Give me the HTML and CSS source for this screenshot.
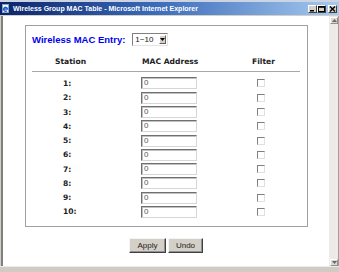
FILE: index.html
```html
<!DOCTYPE html>
<html>
<head>
<meta charset="utf-8">
<link rel="stylesheet" href="styles.css">
</head>
<body>
<div class="win">
  <div class="strip"></div>
  <div class="titlebar">
    <svg class="ie" width="8" height="9" viewBox="0 0 8 9">
      <rect x="0.5" y="0.5" width="6" height="8" fill="#fff" stroke="#8aa0c8"/>
      <path d="M1.5 5 H5.5 A2 2 0 1 0 5 6.6" fill="none" stroke="#1d5fd0" stroke-width="1.3"/>
    </svg>
    <span class="title">Wireless Group MAC Table - Microsoft Internet Explorer</span>
    <div class="ctrls">
      <div class="cbtn"><svg width="7" height="6" viewBox="0 0 7 6"><rect x="1" y="4" width="4" height="1.5" fill="#000"/></svg></div>
      <div class="cbtn"><svg width="7" height="6" viewBox="0 0 7 6"><rect x="0.5" y="0.5" width="6" height="5" fill="none" stroke="#000"/><rect x="0.5" y="0.5" width="6" height="1.3" fill="#000"/></svg></div>
      <div class="cbtn close"><svg width="7" height="6" viewBox="0 0 7 6"><path d="M1 0.5 L6 5.5 M6 0.5 L1 5.5" stroke="#000" stroke-width="1.4"/></svg></div>
    </div>
  </div>
  <div class="client">
    <div class="page">
      <div class="box">
        <div class="entry">
          <span class="entry-label">Wireless MAC Entry:</span>
          <div class="select"><span>1~10</span><div class="sel-btn"><svg width="5" height="3" viewBox="0 0 5 3"><path d="M0 0 H5 L2.5 3 Z" fill="#000"/></svg></div></div>
        </div>
        <div class="grid head">
          <div class="h-station">Station</div>
          <div class="h-mac">MAC Address</div>
          <div class="h-filter">Filter</div>
        </div>
        <div class="rows">
          <div class="grid row"><div class="lbl">1:</div><div class="inp">0</div><div class="chk"></div></div>
          <div class="grid row"><div class="lbl">2:</div><div class="inp">0</div><div class="chk"></div></div>
          <div class="grid row"><div class="lbl">3:</div><div class="inp">0</div><div class="chk"></div></div>
          <div class="grid row"><div class="lbl">4:</div><div class="inp">0</div><div class="chk"></div></div>
          <div class="grid row"><div class="lbl">5:</div><div class="inp">0</div><div class="chk"></div></div>
          <div class="grid row"><div class="lbl">6:</div><div class="inp">0</div><div class="chk"></div></div>
          <div class="grid row"><div class="lbl">7:</div><div class="inp">0</div><div class="chk"></div></div>
          <div class="grid row"><div class="lbl">8:</div><div class="inp">0</div><div class="chk"></div></div>
          <div class="grid row"><div class="lbl">9:</div><div class="inp">0</div><div class="chk"></div></div>
          <div class="grid row"><div class="lbl">10:</div><div class="inp">0</div><div class="chk"></div></div>
        </div>
      </div>
      <div class="actions">
        <div class="btn apply">Apply</div>
        <div class="btn undo">Undo</div>
      </div>
    </div>
    <div class="scroll">
      <div class="sbtn"><svg width="5" height="3" viewBox="0 0 5 3"><path d="M0 3 H5 L2.5 0 Z" fill="#666"/></svg></div>
      <div class="sbtn"><svg width="5" height="3" viewBox="0 0 5 3"><path d="M0 0 H5 L2.5 3 Z" fill="#666"/></svg></div>
    </div>
  </div>
  <div class="bottom"></div>
</div>
</body>
</html>
```
FILE: styles.css
```css
html, body {
  margin: 0;
  padding: 0;
}
body {
  width: 339px;
  height: 272px;
  overflow: hidden;
  background: #d4d0c8;
}
.win {
  width: 339px;
  height: 272px;
  display: flex;
  flex-direction: column;
}
.strip {
  height: 2px;
  background: #ccd3e2;
}
.titlebar {
  height: 13px;
  display: flex;
  align-items: center;
  padding-left: 2px;
  padding-right: 2px;
  background: linear-gradient(to right, #0a246a, #3a6ab8 45%, #a6caf0);
}
.ie {
  display: block;
  flex: none;
}
.title {
  margin-left: 3px;
  font-family: "Liberation Sans", Arial, sans-serif;
  font-weight: bold;
  font-size: 7px;
  color: #fff;
  white-space: nowrap;
}
.ctrls {
  margin-left: auto;
  display: flex;
  align-items: center;
}
.cbtn {
  width: 9px;
  height: 8px;
  box-sizing: border-box;
  background: #d4d0c8;
  border: 1px solid;
  border-color: #fff #404040 #404040 #fff;
  display: flex;
  align-items: center;
  justify-content: center;
}
.cbtn svg { display: block; }
.close { margin-left: 2px; }
.client {
  height: 250px;
  display: flex;
  border-left: 1px solid #d4d0c8;
  margin-top: 1px;
}
.page {
  width: 326px;
  background: #fff;
  border-left: 2px solid #808080;
  box-sizing: border-box;
  width: 328px;
  padding-top: 9px;
  padding-left: 22px;
}
.box {
  width: 283px;
  height: 202px;
  box-sizing: border-box;
  border: 1px solid #a0a0a0;
  padding: 6px 0 0 6px;
}
.entry {
  height: 14px;
  display: flex;
  align-items: center;
  gap: 7px;
}
.entry-label {
  font-family: "Liberation Sans", Arial, sans-serif;
  font-weight: bold;
  font-size: 9.5px;
  color: #0000f0;
  white-space: nowrap;
}
.select {
  width: 36px;
  height: 13px;
  box-sizing: border-box;
  border: 1px solid;
  border-color: #808080 #e4e4e4 #e4e4e4 #808080;
  display: flex;
  align-items: center;
  font-family: "Liberation Sans", Arial, sans-serif;
  font-size: 8px;
  color: #111;
}
.select span { padding-left: 2px; }
.sel-btn {
  margin-left: auto;
  margin-right: 1px;
  width: 7px;
  height: 9px;
  box-sizing: border-box;
  background: #d4d0c8;
  border: 1px solid;
  border-color: #fff #606060 #606060 #fff;
  display: flex;
  align-items: center;
  justify-content: center;
}
.sel-btn svg, .sbtn svg { display: block; }
.grid {
  display: grid;
  grid-template-columns: 109px 111px 48px;
  width: 268px;
  align-items: center;
  font-family: "DejaVu Sans", Verdana, sans-serif;
  font-weight: bold;
  font-size: 7.6px;
  color: #222;
}
.head {
  margin-top: 6px;
  height: 19px;
  border-bottom: 1px solid #a8a8a8;
}
.h-station { padding-left: 23px; }
.h-mac { padding-left: 1px; }
.rows {
  padding-top: 4.3px;
}
.row {
  height: 14.29px;
}
.lbl { padding-left: 31px; }
.inp {
  width: 56px;
  height: 12px;
  box-sizing: border-box;
  border: 1px solid;
  border-color: #707070 #d6d6d6 #d6d6d6 #707070;
  box-shadow: inset 1px 1px 0 #c0c0c0;
  font-family: "Liberation Sans", Arial, sans-serif;
  font-weight: normal;
  font-size: 8px;
  color: #555;
  line-height: 10px;
  padding-left: 2px;
}
.chk {
  margin-left: 5px;
  width: 8px;
  height: 8px;
  box-sizing: border-box;
  border: 1px solid;
  border-color: #808080 #e0e0e0 #e0e0e0 #808080;
  background: #fff;
}
.actions {
  margin-top: 11px;
  margin-left: -22px;
  display: flex;
  justify-content: center;
  gap: 2px;
}
.btn {
  height: 15px;
  box-sizing: border-box;
  background: #d4d0c8;
  border: 1px solid;
  border-color: #f4f4f4 #404040 #404040 #f4f4f4;
  box-shadow: inset -1px -1px 0 #909090;
  font-family: "Liberation Sans", Arial, sans-serif;
  font-size: 8px;
  color: #222;
  display: flex;
  align-items: center;
  justify-content: center;
}
.apply { width: 37px; }
.undo { width: 35px; }
.scroll {
  width: 9px;
  background: #ecebe7;
  border-right: 1px solid #a0a0a0;
  display: flex;
  flex-direction: column;
  justify-content: space-between;
  padding: 1px 0 0 0;
}
.sbtn {
  width: 8px;
  height: 7px;
  box-sizing: border-box;
  margin-left: 1px;
  background: #dcd9d2;
  border: 1px solid;
  border-color: #fff #909090 #909090 #fff;
  display: flex;
  align-items: center;
  justify-content: center;
}
.bottom {
  flex: 1;
  border-top: 1px solid #ececec;
  background: #d0ccc4;
}
```
